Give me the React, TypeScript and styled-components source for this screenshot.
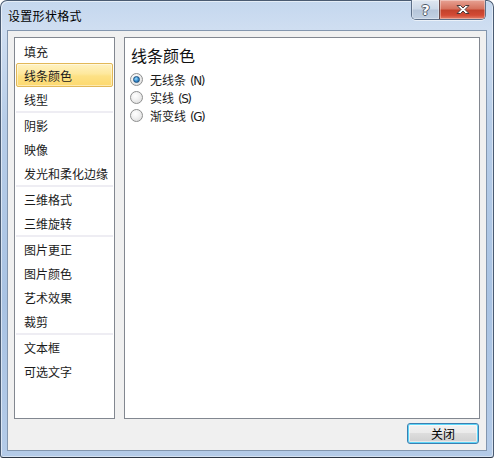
import React from "react";
import styled, { createGlobalStyle } from "styled-components";

const Global = createGlobalStyle`
  html, body { margin: 0; padding: 0; background: #ffffff; }
  body { font-family: "Noto Sans CJK SC", "Noto Sans", sans-serif; font-size: 12px; color: #000; }
`;

const Window = styled.div`
  width: 494px;
  height: 458px;
  box-sizing: border-box;
  border: 1px solid #4a5b72;
  border-bottom-color: #2c3644;
  border-radius: 7px 7px 3px 3px;
  padding: 0 6px 6px 6px;
  display: flex;
  flex-direction: column;
  background:
    linear-gradient(to bottom, #c4d7ee 0px, #cfdef1 28px, #b7cde8 120px, #a9c3e3 300px, #b4cbe8 458px);
  box-shadow: inset 1px 1px 0 rgba(255, 255, 255, 0.55), inset -1px -1px 0 rgba(255, 255, 255, 0.45);
`;

const TitleBar = styled.div`
  height: 29px;
  display: flex;
  align-items: flex-start;
  flex-shrink: 0;
`;

const Title = styled.div`
  padding: 7px 0 0 1px;
  font-size: 12px;
  line-height: 16px;
  color: #000;
  letter-spacing: 0.3px;
`;

const Captions = styled.div`
  margin-left: auto;
  margin-right: 1px;
  margin-top: -1px;
  display: flex;
  height: 19px;
  border: 1px solid #5d6f87;
  border-top: none;
  border-radius: 0 0 5px 5px;
  overflow: hidden;
  box-shadow: 0 1px 0 rgba(255, 255, 255, 0.6);
`;

const CapButton = styled.div<{ $close?: boolean }>`
  width: ${(p) => (p.$close ? "46px" : "27px")};
  height: 19px;
  display: flex;
  align-items: center;
  justify-content: center;
  box-sizing: border-box;
  border-left: ${(p) => (p.$close ? "1px solid #6a4a4a" : "none")};
  background: ${(p) =>
    p.$close
      ? "linear-gradient(to bottom, #e7a294 0%, #d6735f 45%, #c3422c 55%, #d34a34 80%, #e2806a 100%)"
      : "linear-gradient(to bottom, #dfe7f1 0%, #cdd9e8 45%, #b6c6da 55%, #c2d1e3 100%)"};
  box-shadow: inset 0 0 0 1px rgba(255, 255, 255, 0.35);
`;

const HelpGlyph = styled.span`
  font-family: "DejaVu Sans", sans-serif;
  font-weight: bold;
  font-size: 14px;
  line-height: 14px;
  color: #ffffff;
  text-shadow: -1px 0 #4f5a68, 1px 0 #4f5a68, 0 -1px #4f5a68, 0 1px #4f5a68;
`;

const Client = styled.div`
  flex: 1;
  box-sizing: border-box;
  border: 1px solid #8396ae;
  background: #f0f0f0;
  padding: 6px;
  display: flex;
  flex-direction: column;
  gap: 4px;
`;

const Panels = styled.div`
  height: 382px;
  display: flex;
  gap: 9px;
`;

const ListBox = styled.div`
  width: 101px;
  box-sizing: border-box;
  border: 1px solid #828790;
  background: #ffffff;
  padding-top: 1px;
  display: flex;
  flex-direction: column;
`;

const Item = styled.div<{ $selected?: boolean }>`
  height: 24px;
  box-sizing: border-box;
  margin: 0 1px;
  padding-left: 7px;
  display: flex;
  align-items: center;
  font-size: 12px;
  color: #1b1b1b;
  white-space: nowrap;
  border: 1px solid ${(p) => (p.$selected ? "#e2b858" : "transparent")};
  border-radius: 2px;
  background: ${(p) =>
    p.$selected
      ? "linear-gradient(to bottom, #fff2c2 0%, #fee89c 45%, #fde185 55%, #fdd96f 100%)"
      : "transparent"};
  box-shadow: ${(p) => (p.$selected ? "inset 0 0 0 1px rgba(255,255,255,0.45)" : "none")};
`;

const Separator = styled.div`
  height: 2px;
  margin: 0 1px;
  background: #eeedf3;
`;

const Panel = styled.div`
  flex: 1;
  box-sizing: border-box;
  border: 1px solid #828790;
  background: #ffffff;
  padding: 7px 0 0 0;
  display: flex;
  flex-direction: column;
`;

const Heading = styled.div`
  padding-left: 6px;
  font-size: 16px;
  line-height: 20px;
  color: #111111;
  margin-bottom: 5px;
`;

const RadioRow = styled.div`
  height: 18px;
  display: flex;
  align-items: center;
  padding-left: 5px;
  gap: 7px;
  font-size: 12px;
  color: #1b1b1b;
`;

const RadioCircle = styled.span<{ $checked?: boolean }>`
  width: 13px;
  height: 13px;
  box-sizing: border-box;
  border-radius: 50%;
  border: 1px solid #8e8f8f;
  background: radial-gradient(circle at 40% 35%, #ffffff 0%, #f2f2f2 40%, #d6d6d6 100%);
  display: flex;
  align-items: center;
  justify-content: center;
  flex-shrink: 0;
  &::after {
    content: "";
    display: ${(p) => (p.$checked ? "block" : "none")};
    width: 5px;
    height: 5px;
    border-radius: 50%;
    border: 1px solid #1c5180;
    background: radial-gradient(circle at 40% 35%, #9fe0ff 0%, #3a8fd0 50%, #14568f 100%);
  }
`;

const AccessKey = styled.span`
  font-family: "DejaVu Sans", sans-serif;
  font-size: 12px;
  letter-spacing: -1.5px;
  margin-left: 4px;
`;

const ButtonRow = styled.div`
  display: flex;
  justify-content: flex-end;
  padding-right: 1px;
`;

const CloseButton = styled.div`
  width: 72px;
  height: 21px;
  box-sizing: border-box;
  border: 1px solid #3c7fb1;
  border-radius: 3px;
  display: flex;
  align-items: center;
  justify-content: center;
  font-size: 12px;
  color: #000;
  background: linear-gradient(to bottom, #f2f2f2 0%, #ebebeb 45%, #dddddd 50%, #cfcfcf 100%);
  box-shadow: inset 0 0 0 1px #5ed6f8, inset 0 0 0 2px rgba(255, 255, 255, 0.5);
`;

const groups: string[][] = [
  ["填充", "线条颜色", "线型"],
  ["阴影", "映像", "发光和柔化边缘"],
  ["三维格式", "三维旋转"],
  ["图片更正", "图片颜色", "艺术效果", "裁剪"],
  ["文本框", "可选文字"],
];

const radios = [
  { label: "无线条", key: "N", checked: true },
  { label: "实线", key: "S", checked: false },
  { label: "渐变线", key: "G", checked: false },
];

export default function App() {
  return (
    <>
      <Global />
      <Window>
        <TitleBar>
          <Title>设置形状格式</Title>
          <Captions>
            <CapButton>
              <HelpGlyph>?</HelpGlyph>
            </CapButton>
            <CapButton $close>
              <svg width="16" height="11" viewBox="0 0 16 11">
                <path
                  d="M2 1.5 L5.5 1.5 L8 4 L10.5 1.5 L14 1.5 L10 5.5 L14 9.5 L10.5 9.5 L8 7 L5.5 9.5 L2 9.5 L6 5.5 Z"
                  fill="#ffffff"
                  stroke="#4a3a3a"
                  strokeWidth="1"
                  strokeLinejoin="round"
                />
              </svg>
            </CapButton>
          </Captions>
        </TitleBar>
        <Client>
          <Panels>
            <ListBox>
              {groups.map((g, gi) => (
                <React.Fragment key={gi}>
                  {gi > 0 && <Separator />}
                  {g.map((t) => (
                    <Item key={t} $selected={t === "线条颜色"}>
                      {t}
                    </Item>
                  ))}
                </React.Fragment>
              ))}
            </ListBox>
            <Panel>
              <Heading>线条颜色</Heading>
              {radios.map((r) => (
                <RadioRow key={r.key}>
                  <RadioCircle $checked={r.checked} />
                  <span>
                    {r.label}
                    <AccessKey>({r.key})</AccessKey>
                  </span>
                </RadioRow>
              ))}
            </Panel>
          </Panels>
          <ButtonRow>
            <CloseButton>关闭</CloseButton>
          </ButtonRow>
        </Client>
      </Window>
    </>
  );
}
